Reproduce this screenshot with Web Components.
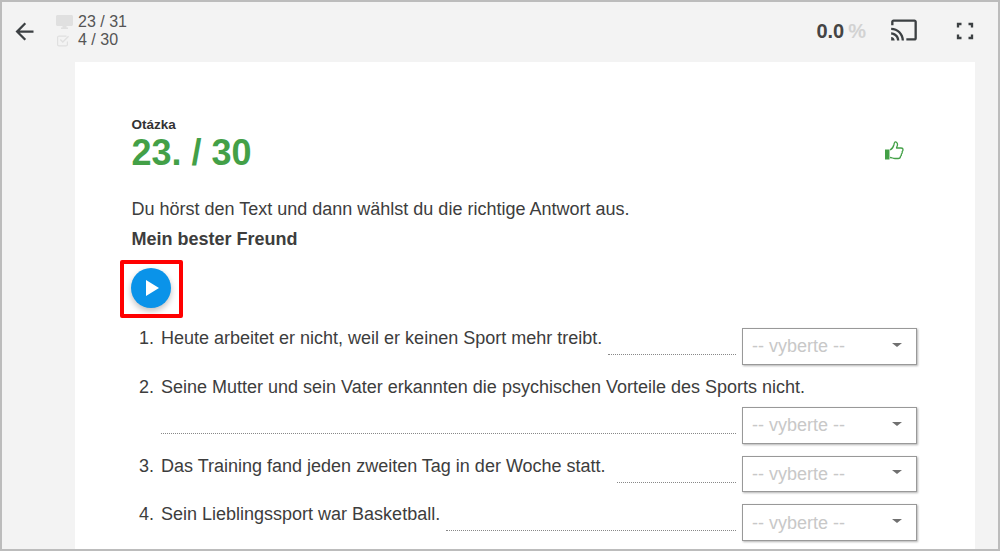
<!DOCTYPE html>
<html lang="de">
<head>
<meta charset="utf-8">
<title>Otázka</title>
<style>
    html, body { margin: 0; padding: 0; background: #fff; }
    body { font-family: "Liberation Sans", Arial, sans-serif; }
</style>
</head>
<body>
<test-app>
    <test-topbar slot="bar"></test-topbar>
    <test-sheet number="23. / 30">
        <p>Du hörst den Text und dann wählst du die richtige Antwort aus.</p>
        <p><b>Mein bester Freund</b></p>
        <play-button></play-button>
        <answer-list>
            <answer-row number="1.">Heute arbeitet er nicht, weil er keinen Sport mehr treibt.</answer-row>
            <answer-row number="2.">Seine Mutter und sein Vater erkannten die psychischen Vorteile des Sports nicht.</answer-row>
            <answer-row number="3." lead="11">Das Training fand jeden zweiten Tag in der Woche statt.</answer-row>
            <answer-row number="4.">Sein Lieblingssport war Basketball.</answer-row>
        </answer-list>
    </test-sheet>
</test-app>

<script>
class TestApp extends HTMLElement {
    constructor() {
        super();
        this.attachShadow({ mode: 'open' });
        this.shadowRoot.innerHTML = `
            <style>
                :host {
                    display: flex;
                    flex-direction: column;
                    box-sizing: border-box;
                    width: 1000px;
                    height: 551px;
                    overflow: hidden;
                    border: 2px solid #bcbcbc;
                    background: #f3f3f3;
                    color: #3d3d3d;
                    font-family: "Liberation Sans", Arial, sans-serif;
                }
                .content { padding: 0 23px 0 73px; }
            </style>
            <slot name="bar"></slot>
            <div class="content"><slot></slot></div>
        `;
    }
}

class TestTopbar extends HTMLElement {
    constructor() {
        super();
        this.attachShadow({ mode: 'open' });
        this.shadowRoot.innerHTML = `
            <style>
                :host {
                    display: flex;
                    align-items: center;
                    height: 60px;
                    flex: none;
                    color: #555;
                }
                svg { display: block; fill: currentColor; flex: none; }
                .back { margin-left: 9px; margin-top: -2px; color: #3c4043; }
                .stats {
                    margin-left: 18px;
                    margin-top: -2px;
                    display: grid;
                    grid-template-columns: 22px auto;
                    align-items: center;
                    font-size: 16px;
                    line-height: 18px;
                }
                .stats svg { fill: #e0e0e0; }
                .spacer { flex: 1; }
                .pct { font-size: 20px; font-weight: bold; color: #444; margin-top: -2px; }
                .pct span { color: #d2d2d2; margin-left: 4px; }
                .cast { margin-left: 24px; color: #3c4043; margin-top: -4px; }
                .full { margin-left: 33px; margin-right: 19px; color: #3c4043; margin-top: -3px; }
            </style>
            <svg class="back" width="27" height="27" viewBox="0 0 24 24"><path d="M20 11H7.83l5.59-5.59L12 4l-8 8 8 8 1.41-1.41L7.83 13H20v-2z"/></svg>
            <div class="stats">
                <svg width="17" height="14" viewBox="0 0 17 14"><path d="M1.5 0h14c.8 0 1.5.7 1.5 1.5V9.5c0 .8-.7 1.5-1.5 1.5H10.5v1.5H12V14H5v-1.5h1.5V11h-5C.7 11 0 10.300 0 9.500V1.500C0 .7.700 0 1.500 0z"/></svg>
                <span>23 / 31</span>
                <svg width="16" height="13" viewBox="0 0 16 13"><path d="M3 1.500h7.500v1.200H3c-.5 0-.8.3-.8.800v7c0 .5.300.8.800.8h7c.5 0 .8-.3.800-.8V7.500H12v3c0 1.200-.9 2-2 2H3c-1.100 0-2-.8-2-2v-7c0-1.100.9-2 2-2z"/><path d="M3.800 6l1-1 2 2L12 1.800l1 1-6.200 6.200z"/></svg>
                <span>4 / 30</span>
            </div>
            <div class="spacer"></div>
            <div class="pct">0.0<span>%</span></div>
            <svg class="cast" width="28" height="28" viewBox="0 0 24 24"><path d="M21 3H3c-1.100 0-2 .9-2 2v3h2V5h18v14h-7v2h7c1.100 0 2-.9 2-2V5c0-1.100-.9-2-2-2zM1 18v3h3c0-1.660-1.340-3-3-3zm0-4v2c2.760 0 5 2.240 5 5h2c0-3.870-3.130-7-7-7zm0-4v2c4.970 0 9 4.030 9 9h2c0-6.080-4.930-11-11-11z"/></svg>
            <svg class="full" width="28" height="28" viewBox="0 0 24 24"><path d="M7 15H5v4h4v-2H7v-2zm-2-6h2V7h2V5H5v4zm12 8h-2v2h4v-4h-2v2zM15 5v2h2v2h2V5h-4z"/></svg>
        `;
    }
}

class TestSheet extends HTMLElement {
    constructor() {
        super();
        this.attachShadow({ mode: 'open' });
        this.shadowRoot.innerHTML = `
            <style>
                :host {
                    display: block;
                    background: #fff;
                    padding: 56px 58px 40px 56.5px;
                    font-size: 18px;
                    line-height: 30px;
                }
                .head { display: flex; justify-content: space-between; margin-bottom: 20px; }
                .label { font-size: 13.5px; font-weight: bold; line-height: 14px; color: #333; }
                .number { font-size: 36px; font-weight: bold; line-height: 42px; color: #43a047; }
                svg { display: block; margin: 23px 13px 0 0; }
                ::slotted(p) { margin: 0; }
            </style>
            <div class="head">
                <div>
                    <div class="label">Otázka</div>
                    <div class="number"></div>
                </div>
                <svg width="20" height="20" viewBox="0 0 20 20" fill="none" stroke="#43a047" stroke-width="1.300" stroke-linejoin="round">
                    <path fill="#43a047" stroke="none" d="M1 8.500h4.500v10H1z"/>
                    <path d="M6 9c2-1 3.500-3.500 4-5.500.2-1 .2-2 1-2.500 1.500-.3 2.500 1 2.500 2.500 0 1.500-.8 2.500-1 3.500h4.500c1.200 0 2 .9 2 1.800 0 .7-.4 1.300-.8 1.700.3 1.200 0 2-.8 2.500.2 1.200-.2 2-1 2.500 0 1.500-1 2-2.200 2H11c-2 0-3-1-5-1"/>
                </svg>
            </div>
            <slot></slot>
        `;
        this.shadowRoot.querySelector('.number').textContent = this.getAttribute('number');
    }
}

class PlayButton extends HTMLElement {
    constructor() {
        super();
        this.attachShadow({ mode: 'open' });
        this.shadowRoot.innerHTML = `
            <style>
                :host {
                    display: block;
                    position: relative;
                    width: 40px;
                    height: 40px;
                    margin: 14px 0 20px -0.500px;
                }
                .round {
                    width: 40px;
                    height: 40px;
                    border-radius: 50%;
                    background: #0a93e9;
                    box-shadow: 0 3px 6px rgba(0, 0, 0, 0.25);
                    display: flex;
                    align-items: center;
                    justify-content: center;
                }
                .tri {
                    width: 0;
                    height: 0;
                    margin-left: 3px;
                    border-left: 13px solid #fff;
                    border-top: 8px solid transparent;
                    border-bottom: 8px solid transparent;
                }
                /* red marker lies over the button */
                .mark {
                    position: absolute;
                    left: -11px;
                    top: -8px;
                    width: 55px;
                    height: 50px;
                    border: 4px solid #f00;
                    border-radius: 2px;
                }
            </style>
            <div class="round"><div class="tri"></div></div>
            <div class="mark"></div>
        `;
    }
}

class AnswerList extends HTMLElement {
    constructor() {
        super();
        this.attachShadow({ mode: 'open' });
        this.shadowRoot.innerHTML = `
            <style>
                :host { display: flex; flex-direction: column; gap: 12px; }
                ::slotted(:first-child) { margin-bottom: 0.400px; }
            </style>
            <slot></slot>
        `;
    }
}

class AnswerRow extends HTMLElement {
    constructor() {
        super();
        this.attachShadow({ mode: 'open' });
        this.shadowRoot.innerHTML = `
            <style>
                :host {
                    display: grid;
                    grid-template-columns: 22.500px 1fr;
                    column-gap: 7px;
                    line-height: 20px;
                    font-size: 18px;
                }
                .num { text-align: right; }
                .body { display: flex; flex-wrap: wrap; row-gap: 10px; }
                .text { flex: none; }
                .fill { flex: 1 1 130px; display: flex; min-width: 0; }
                .leader { flex: 1; height: 26px; border-bottom: 1px dotted #888; }
            </style>
            <div class="num"></div>
            <div class="body">
                <div class="text"><slot></slot></div>
                <div class="fill">
                    <div class="leader"></div>
                    <pick-select></pick-select>
                </div>
            </div>
        `;
        this.shadowRoot.querySelector('.num').textContent = this.getAttribute('number');
        this.shadowRoot.querySelector('.text').style.paddingRight = (this.getAttribute('lead') || 6) + 'px';
    }
}

class PickSelect extends HTMLElement {
    constructor() {
        super();
        this.attachShadow({ mode: 'open' });
        this.shadowRoot.innerHTML = `
            <style>
                :host {
                    display: flex;
                    align-items: center;
                    box-sizing: border-box;
                    flex: none;
                    width: 175px;
                    height: 36.600px;
                    margin-left: 6px;
                    padding: 0.100px 14px 0 9px;
                    border: 1px solid #999;
                    background: #fff;
                    box-shadow: 1px 1px 2px rgba(0, 0, 0, 0.3);
                    color: #c8c8c8;
                    font-size: 18px;
                    line-height: 20px;
                }
                span { flex: 1; }
                i {
                    width: 0;
                    height: 0;
                    border-left: 5px solid transparent;
                    border-right: 5px solid transparent;
                    border-top: 4px solid #707070;
                    margin-top: -3px;
                }
            </style>
            <span>-- vyberte --</span><i></i>
        `;
    }
}

customElements.define('test-app', TestApp);
customElements.define('test-topbar', TestTopbar);
customElements.define('test-sheet', TestSheet);
customElements.define('play-button', PlayButton);
customElements.define('answer-list', AnswerList);
customElements.define('answer-row', AnswerRow);
customElements.define('pick-select', PickSelect);
</script>
</body>
</html>
